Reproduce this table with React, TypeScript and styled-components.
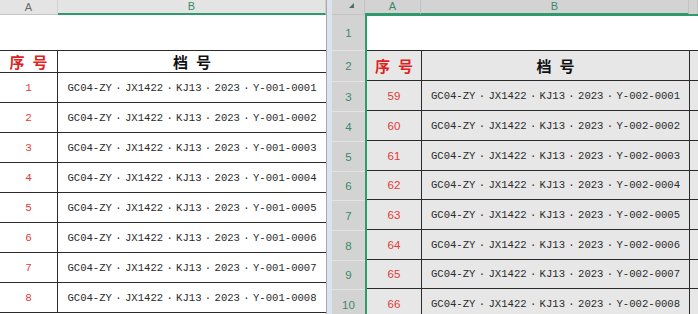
import React from "react";
import styled, { createGlobalStyle } from "styled-components";

const GlobalStyle = createGlobalStyle`
  html, body {
    margin: 0;
    padding: 0;
    background: #ffffff;
    overflow: hidden;
  }
  * {
    box-sizing: border-box;
  }
`;

const GREEN = "#2f9a6c";
const GREEN_TEXT = "#3a8a68";
const LINE = "#2b2b2b";

const Screen = styled.div`
  display: flex;
  width: 698px;
  height: 314px;
  overflow: hidden;
  font-family: "Liberation Sans", Arial, sans-serif;
`;

const LeftPane = styled.div`
  width: 327px;
  flex: none;
  display: flex;
  flex-direction: column;
  border-right: 1px solid #a8a8a8;
  overflow: hidden;
`;

const Splitter = styled.div`
  width: 5px;
  flex: none;
  background: #dbe4ee;
`;

const RightPane = styled.div`
  flex: 1;
  display: flex;
  flex-direction: column;
  overflow: hidden;
`;

const ColHeaderRow = styled.div`
  display: flex;
  height: 15px;
  flex: none;
`;

const ColHeader = styled.div<{ $w?: number; $selected?: boolean; $dark?: boolean }>`
  width: ${(p) => (p.$w ? `${p.$w}px` : "auto")};
  flex: ${(p) => (p.$w ? "none" : "1")};
  height: 15px;
  display: flex;
  align-items: center;
  justify-content: center;
  font-size: 11px;
  padding-bottom: 1px;
  color: ${(p) => (p.$selected ? GREEN_TEXT : "#6a6a6a")};
  background: ${(p) => (p.$dark ? "#d3d3d3" : "#e4e4e4")};
  border-right: 1px solid ${(p) => (p.$dark ? "#c2c2c2" : "#d0d0d0")};
  border-bottom: ${(p) => (p.$selected ? `2px solid ${GREEN}` : "1px solid #c4c4c4")};
`;

const Corner = styled.div`
  width: 33px;
  flex: none;
  height: 15px;
  background: #d3d3d3;
  border-right: 1px solid #c2c2c2;
  border-bottom: 1px solid #c4c4c4;
  display: flex;
  align-items: flex-start;
  justify-content: center;
  padding-top: 3px;
  padding-left: 6px;
`;

const Grid = styled.div`
  display: flex;
  flex-direction: column;
  flex: 1;
`;

const Row = styled.div<{ $h: number; $top?: boolean; $bottom?: boolean; $shade?: boolean }>`
  display: flex;
  height: ${(p) => p.$h}px;
  flex: none;
  background: ${(p) => (p.$shade ? "#e7e7e7" : "#ffffff")};
  border-top: ${(p) => (p.$top ? `1px solid ${LINE}` : "none")};
  border-bottom: ${(p) => (p.$bottom ? `1px solid ${LINE}` : "none")};
`;

const Cell = styled.div<{ $w?: number; $edge?: boolean }>`
  width: ${(p) => (p.$w ? `${p.$w}px` : "auto")};
  flex: ${(p) => (p.$w ? "none" : "1")};
  display: flex;
  align-items: center;
  justify-content: center;
  border-right: ${(p) => (p.$edge ? `1px solid ${LINE}` : "none")};
  white-space: nowrap;
  overflow: hidden;
`;

const HeadText = styled.span<{ $red?: boolean }>`
  font-family: "Noto Sans CJK SC", "Noto Sans", sans-serif;
  font-weight: 700;
  font-size: 15px;
  letter-spacing: 8px;
  margin-right: -8px;
  color: ${(p) => (p.$red ? "#e0201c" : "#111111")};
`;

const Num = styled.span<{ $mono?: boolean }>`
  font-family: ${(p) => (p.$mono ? '"Liberation Mono", monospace' : '"Liberation Sans", Arial, sans-serif')};
  font-size: ${(p) => (p.$mono ? "11px" : "11.5px")};
  color: #df3b36;
`;

const Code = styled.span`
  font-family: "Liberation Mono", "Courier New", monospace;
  font-size: 10.6px;
  color: #2a2a2a;
  display: inline-flex;
  align-items: center;
`;

const Dot = styled.span`
  display: inline-block;
  width: 13px;
  text-align: center;
`;

const Body = styled.div`
  display: flex;
  flex: 1;
`;

const RowHeaders = styled.div`
  width: 33px;
  flex: none;
  display: flex;
  flex-direction: column;
  background: #d3d3d3;
`;

const RowHeader = styled.div<{ $h: number }>`
  height: ${(p) => p.$h}px;
  flex: none;
  display: flex;
  align-items: center;
  justify-content: center;
  font-size: 11.5px;
  color: ${GREEN_TEXT};
  border-bottom: 1px solid #e3e3e3;
`;

const Sheet = styled.div`
  flex: 1;
  display: flex;
  flex-direction: column;
  border-left: 2px solid ${GREEN};
  border-top: 2px solid ${GREEN};
  margin-top: -1px;
`;

const CodeText = ({ text }: { text: string }) => {
  const parts = text.split("・");
  return (
    <Code>
      {parts.map((part, i) => (
        <React.Fragment key={i}>
          {i > 0 && <Dot>·</Dot>}
          {part}
        </React.Fragment>
      ))}
    </Code>
  );
};

const pad = (n: number) => String(n).padStart(4, "0");
const code = (batch: string, n: number) => `GC04-ZY・JX1422・KJ13・2023・Y-${batch}-${pad(n)}`;

const leftRows = [1, 2, 3, 4, 5, 6, 7, 8];
const rightRows = [59, 60, 61, 62, 63, 64, 65, 66];
const rightHeaderHeights = [36, 31, 30, 30, 30, 29, 30, 30, 29, 30];

export default function App() {
  return (
    <>
      <GlobalStyle />
      <Screen>
        <LeftPane>
          <ColHeaderRow>
            <ColHeader $w={58}>A</ColHeader>
            <ColHeader $selected>B</ColHeader>
          </ColHeaderRow>
          <Grid>
            <Row $h={35} />
            <Row $h={23} $top $bottom>
              <Cell $w={58} $edge>
                <HeadText $red>序号</HeadText>
              </Cell>
              <Cell>
                <HeadText>档号</HeadText>
              </Cell>
            </Row>
            {leftRows.map((n) => (
              <Row key={n} $h={30} $bottom>
                <Cell $w={58} $edge>
                  <Num $mono>{n}</Num>
                </Cell>
                <Cell>
                  <CodeText text={code("001", n)} />
                </Cell>
              </Row>
            ))}
          </Grid>
        </LeftPane>
        <Splitter />
        <RightPane>
          <ColHeaderRow>
            <Corner>
              <svg width="5" height="5" viewBox="0 0 6 6">
                <polygon points="6,0 6,6 0,6" fill="#4b6f62" />
              </svg>
            </Corner>
            <ColHeader $w={56} $selected $dark>A</ColHeader>
            <ColHeader $w={268} $selected $dark>B</ColHeader>
            <ColHeader $dark />
          </ColHeaderRow>
          <Body>
            <RowHeaders>
              {rightHeaderHeights.map((h, i) => (
                <RowHeader key={i} $h={h}>
                  {i + 1}
                </RowHeader>
              ))}
            </RowHeaders>
            <Sheet>
              <Row $h={34} />
              <Row $h={31} $top $bottom $shade>
                <Cell $w={55} $edge>
                  <HeadText $red>序号</HeadText>
                </Cell>
                <Cell $w={268} $edge>
                  <HeadText>档号</HeadText>
                </Cell>
                <Cell />
              </Row>
              {rightRows.map((n, i) => (
                <Row key={n} $h={rightHeaderHeights[i + 2]} $bottom $shade>
                  <Cell $w={55} $edge>
                    <Num>{n}</Num>
                  </Cell>
                  <Cell $w={268} $edge>
                    <CodeText text={code("002", i + 1)} />
                  </Cell>
                  <Cell />
                </Row>
              ))}
            </Sheet>
          </Body>
        </RightPane>
      </Screen>
    </>
  );
}
